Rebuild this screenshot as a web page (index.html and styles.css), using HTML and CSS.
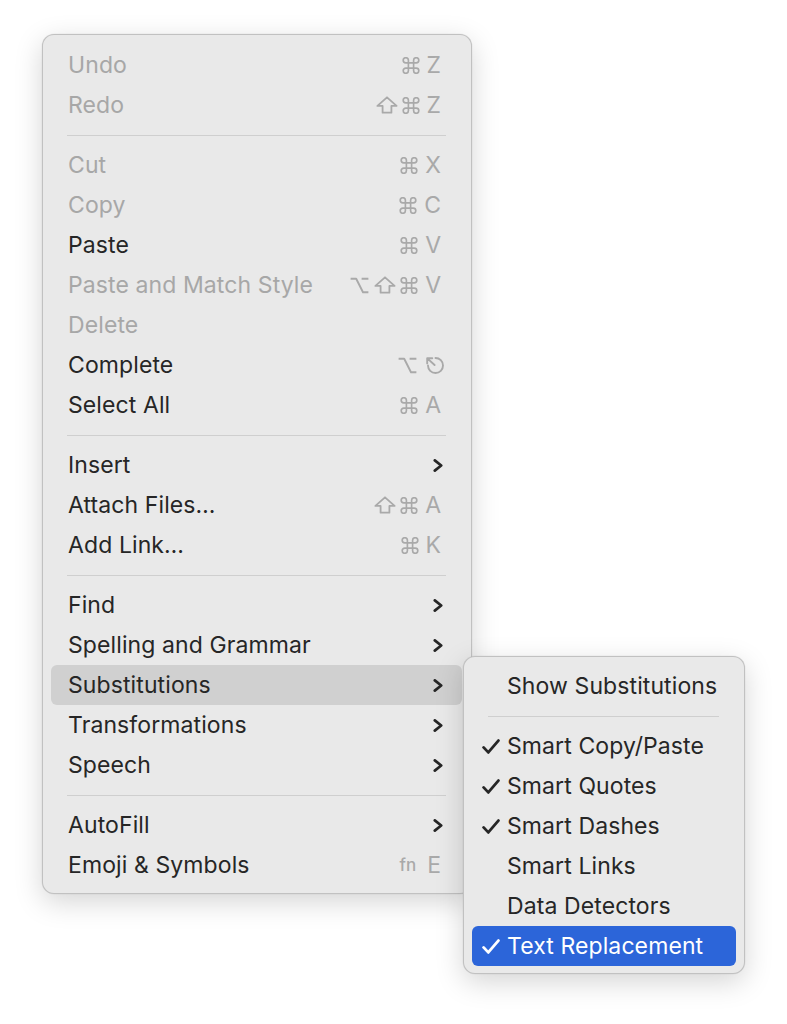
FILE: index.html
```html
<!DOCTYPE html>
<html lang="en">
<head>
<meta charset="utf-8">
<title>Edit Menu</title>
<link rel="stylesheet" href="styles.css">
</head>
<body>
<svg class="defs" aria-hidden="true">
  <symbol id="i-cmd" viewBox="2.2 2.2 19.6 19.6">
    <path d="M15 6v12a3 3 0 1 0 3-3H6a3 3 0 1 0 3 3V6a3 3 0 1 0-3 3h12a3 3 0 1 0-3-3" fill="none" stroke="currentColor" stroke-width="1.9" stroke-linejoin="round"/>
  </symbol>
  <symbol id="i-shift" viewBox="0 0 22 18">
    <path d="M11 1.3 L20.6 9.9 H15.4 V16.7 H6.6 V9.9 H1.4 Z" fill="none" stroke="currentColor" stroke-width="1.8" stroke-linejoin="round"/>
  </symbol>
  <symbol id="i-opt" viewBox="0 0 19 17">
    <path d="M0.6 1.8 H6.2 L13 15.2 H18.4 M11.6 1.8 H18.4" fill="none" stroke="currentColor" stroke-width="1.9" stroke-linejoin="round"/>
  </symbol>
  <symbol id="i-esc" viewBox="0 0 20 17">
    <path d="M11.5 1 A7.5 7.5 0 1 1 4 8.5" fill="none" stroke="currentColor" stroke-width="1.9" stroke-linecap="round"/>
    <path d="M10.6 8 L3.6 1.6 M3.2 6.4 V1.3 H8.3" fill="none" stroke="currentColor" stroke-width="1.9" stroke-linecap="round" stroke-linejoin="round"/>
  </symbol>
  <symbol id="i-chev" viewBox="0 0 10 13">
    <path d="M1.8 1.4 L8.2 6.5 L1.8 11.6" fill="none" stroke="currentColor" stroke-width="2.7" stroke-linecap="round" stroke-linejoin="round"/>
  </symbol>
  <symbol id="i-check" viewBox="0 0 18 15">
    <path d="M1.6 8.4 L6.3 13.4 L16.4 1.6" fill="none" stroke="currentColor" stroke-width="2.8" stroke-linecap="round" stroke-linejoin="round"/>
  </symbol>
</svg>

<div class="stage">
  <div class="menu main-menu">
    <div class="item disabled"><span class="label">Undo</span><span class="keys"><svg class="k-cmd"><use href="#i-cmd"/></svg><span class="k-letter">Z</span></span></div>
    <div class="item disabled"><span class="label">Redo</span><span class="keys"><svg class="k-shift"><use href="#i-shift"/></svg><svg class="k-cmd"><use href="#i-cmd"/></svg><span class="k-letter">Z</span></span></div>
    <div class="sep"></div>
    <div class="item disabled"><span class="label">Cut</span><span class="keys"><svg class="k-cmd"><use href="#i-cmd"/></svg><span class="k-letter">X</span></span></div>
    <div class="item disabled"><span class="label">Copy</span><span class="keys"><svg class="k-cmd"><use href="#i-cmd"/></svg><span class="k-letter">C</span></span></div>
    <div class="item"><span class="label">Paste</span><span class="keys"><svg class="k-cmd"><use href="#i-cmd"/></svg><span class="k-letter">V</span></span></div>
    <div class="item disabled"><span class="label">Paste and Match Style</span><span class="keys"><svg class="k-opt"><use href="#i-opt"/></svg><svg class="k-shift"><use href="#i-shift"/></svg><svg class="k-cmd"><use href="#i-cmd"/></svg><span class="k-letter">V</span></span></div>
    <div class="item disabled"><span class="label">Delete</span></div>
    <div class="item"><span class="label">Complete</span><span class="keys"><svg class="k-opt"><use href="#i-opt"/></svg><svg class="k-esc"><use href="#i-esc"/></svg></span></div>
    <div class="item"><span class="label">Select All</span><span class="keys"><svg class="k-cmd"><use href="#i-cmd"/></svg><span class="k-letter">A</span></span></div>
    <div class="sep"></div>
    <div class="item"><span class="label">Insert</span><svg class="chev"><use href="#i-chev"/></svg></div>
    <div class="item"><span class="label">Attach Files…</span><span class="keys"><svg class="k-shift"><use href="#i-shift"/></svg><svg class="k-cmd"><use href="#i-cmd"/></svg><span class="k-letter">A</span></span></div>
    <div class="item"><span class="label">Add Link…</span><span class="keys"><svg class="k-cmd"><use href="#i-cmd"/></svg><span class="k-letter">K</span></span></div>
    <div class="sep"></div>
    <div class="item"><span class="label">Find</span><svg class="chev"><use href="#i-chev"/></svg></div>
    <div class="item"><span class="label">Spelling and Grammar</span><svg class="chev"><use href="#i-chev"/></svg></div>
    <div class="item open"><span class="label">Substitutions</span><svg class="chev"><use href="#i-chev"/></svg></div>
    <div class="item"><span class="label">Transformations</span><svg class="chev"><use href="#i-chev"/></svg></div>
    <div class="item"><span class="label">Speech</span><svg class="chev"><use href="#i-chev"/></svg></div>
    <div class="sep"></div>
    <div class="item"><span class="label">AutoFill</span><svg class="chev"><use href="#i-chev"/></svg></div>
    <div class="item"><span class="label">Emoji &amp; Symbols</span><span class="keys"><span class="k-fn">fn</span><span class="k-letter">E</span></span></div>
  </div>

  <div class="menu sub-menu">
    <div class="item"><span class="check-col"></span><span class="label">Show Substitutions</span></div>
    <div class="sep"></div>
    <div class="item"><span class="check-col"><svg class="check"><use href="#i-check"/></svg></span><span class="label">Smart Copy/Paste</span></div>
    <div class="item"><span class="check-col"><svg class="check"><use href="#i-check"/></svg></span><span class="label">Smart Quotes</span></div>
    <div class="item"><span class="check-col"><svg class="check"><use href="#i-check"/></svg></span><span class="label">Smart Dashes</span></div>
    <div class="item"><span class="check-col"></span><span class="label">Smart Links</span></div>
    <div class="item"><span class="check-col"></span><span class="label">Data Detectors</span></div>
    <div class="item selected"><span class="check-col"><svg class="check"><use href="#i-check"/></svg></span><span class="label">Text Replacement</span></div>
  </div>
</div>
</body>
</html>
```

FILE: styles.css
```css
* { box-sizing: border-box; }

html, body {
  margin: 0;
  padding: 0;
  background: #ffffff;
}

body {
  font-family: "Inter", "Liberation Sans", sans-serif;
  font-size: 23px;
  color: #262626;
  -webkit-font-smoothing: antialiased;
}

.defs {
  position: absolute;
  width: 0;
  height: 0;
  overflow: hidden;
}

.stage {
  position: relative;
  width: 787px;
  height: 1024px;
  padding: 34px 0 0 42px;
}

.menu {
  background: #e9e9e9;
  border: 1px solid rgba(0, 0, 0, 0.17);
  border-radius: 12px;
  box-shadow: 0 0 0 0.5px rgba(0, 0, 0, 0.05), 0 8px 28px rgba(0, 0, 0, 0.17);
}

.main-menu {
  width: 430px;
  padding: 10px 0 8px;
}

.sub-menu {
  position: absolute;
  left: 463px;
  top: 656px;
  width: 282px;
  padding: 9px 0 7px;
}

.item {
  display: flex;
  align-items: center;
  height: 40px;
  border-radius: 6px;
  white-space: nowrap;
}

.main-menu .item {
  margin: 0 9px 0 8px;
  padding: 0 21px 0 17px;
}

.sub-menu .item {
  margin: 0 8px;
  padding: 0 12px 0 10px;
}

.label {
  flex: 1;
  letter-spacing: 0.1px;
}

.item.disabled .label {
  color: #a7a7a7;
}

.item.open {
  background: #d0d0d0;
}

.item.selected {
  background: #2c65d9;
  color: #ffffff;
}

.sep {
  height: 20px;
  display: flex;
  align-items: center;
  margin: 0 25px 0 24px;
}

.sep::before {
  content: "";
  flex: 1;
  height: 1px;
  background: #cfcfcf;
}

.keys {
  display: flex;
  align-items: center;
  gap: 4px;
  color: #a9a9a9;
}

.k-cmd { width: 18px; height: 17px; }
.k-shift { width: 22px; height: 18px; }
.k-opt { width: 19px; height: 17px; margin-right: 1px; }
.k-esc { width: 20px; height: 17px; margin-left: 2px; margin-right: -3px; }

.k-letter {
  margin-left: 3px;
  font-size: 23px;
  line-height: 1;
}

.k-fn {
  font-size: 17px;
  font-weight: 500;
  margin-right: 4px;
}

.chev {
  width: 10px;
  height: 13px;
  margin-right: -2px;
  color: #262626;
}

.check-col {
  width: 25px;
  flex: none;
  display: flex;
  align-items: center;
}

.check {
  width: 18px;
  height: 15px;
}
```
